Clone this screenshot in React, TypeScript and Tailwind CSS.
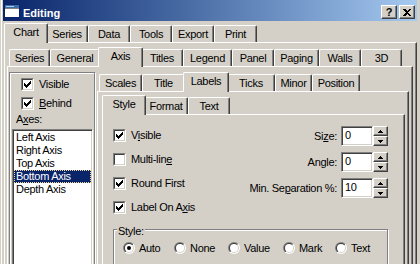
import React from "react";

const tabBase =
  "shrink-0 bg-[#D4D0C8] border-t border-l border-r border-white border-r-[#404040] rounded-t-[2px] shadow-[inset_-1px_0_0_#808080] pt-[2px] text-center whitespace-nowrap leading-[13px]";

function Tab({ label, w, sel }: { label: string; w: string; sel?: boolean }) {
  if (sel) {
    return <div className={`${tabBase} ${w} relative z-10 -mx-[2px] -mb-px h-[20px]`}>{label}</div>;
  }
  return <div className={`${tabBase} ${w} h-[17px]`}>{label}</div>;
}

function TabRow({ children }: { children: React.ReactNode }) {
  return <div className="flex items-end h-[19px] pl-[2px]">{children}</div>;
}

const panelCls =
  "bg-[#D4D0C8] border-t border-l border-r border-white border-r-[#404040] shadow-[inset_-1px_0_0_#808080]";

function Check({ on }: { on?: boolean }) {
  return (
    <span className="block w-[13px] h-[13px] shrink-0 border border-t-[#808080] border-l-[#808080] border-r-white border-b-white">
      <span className="block w-[11px] h-[11px] border border-t-[#404040] border-l-[#404040] border-r-[#D4D0C8] border-b-[#D4D0C8] bg-white">
        {on && (
          <svg width="9" height="9" viewBox="0 0 9 9" shapeRendering="crispEdges" className="block">
            {[
              [1, 3],
              [2, 4],
              [3, 5],
              [4, 4],
              [5, 3],
              [6, 2],
              [7, 1],
            ].map(([x, y]) => (
              <rect key={x} x={x} y={y} width="1" height="3" fill="#000" />
            ))}
          </svg>
        )}
      </span>
    </span>
  );
}

function CheckRow({ on, children }: { on?: boolean; children: React.ReactNode }) {
  return (
    <div className="flex items-center h-[13px] gap-[5px] whitespace-nowrap">
      <Check on={on} />
      <span>{children}</span>
    </div>
  );
}

function Radio({ on }: { on?: boolean }) {
  return (
    <svg width="12" height="12" viewBox="0 0 12 12" className="block shrink-0">
      <defs>
        <linearGradient id="rgo" x1="0" y1="0" x2="1" y2="1">
          <stop offset="0.5" stopColor="#808080" />
          <stop offset="0.5" stopColor="#ffffff" />
        </linearGradient>
        <linearGradient id="rgi" x1="0" y1="0" x2="1" y2="1">
          <stop offset="0.5" stopColor="#404040" />
          <stop offset="0.5" stopColor="#D4D0C8" />
        </linearGradient>
      </defs>
      <circle cx="6" cy="6" r="6" fill="url(#rgo)" />
      <circle cx="6" cy="6" r="5" fill="url(#rgi)" />
      <circle cx="6" cy="6" r="4" fill="#fff" />
      {on && <circle cx="6" cy="6" r="2" fill="#000" />}
    </svg>
  );
}

function RadioItem({ on, label, w }: { on?: boolean; label: string; w: string }) {
  return (
    <div className={`flex items-center h-[12px] ${w} shrink-0 whitespace-nowrap`}>
      <Radio on={on} />
      <span className="ml-[4px]">{label}</span>
    </div>
  );
}

function SpinBtn({ up }: { up?: boolean }) {
  return (
    <div className="h-[10px] w-[15px] bg-[#D4D0C8] border border-t-white border-l-white border-r-[#404040] border-b-[#404040] shadow-[inset_-1px_-1px_0_#808080] flex items-center justify-center">
      <svg width="5" height="3" viewBox="0 0 5 3" shapeRendering="crispEdges" className="block">
        {up ? (
          <path d="M2 0h1v1h1v1h1v1H0V2h1V1h1z" fill="#000" />
        ) : (
          <path d="M0 0h5v1H4v1H3v1H2V2H1V1H0z" fill="#000" />
        )}
      </svg>
    </div>
  );
}

function Field({ label, value }: { label: React.ReactNode; value: string }) {
  return (
    <div className="flex items-center h-[20px] whitespace-nowrap">
      <span>{label}</span>
      <div className="ml-[4px] w-[32px] h-[20px] bg-white border border-t-[#808080] border-l-[#808080] border-r-white border-b-white shadow-[inset_1px_1px_0_#404040,inset_-1px_-1px_0_#D4D0C8] pl-[3px] leading-[16px]">
        {value}
      </div>
      <div className="flex flex-col">
        <SpinBtn up />
        <SpinBtn />
      </div>
    </div>
  );
}

function CapBtn({ children }: { children: React.ReactNode }) {
  return (
    <div className="w-[16px] h-[14px] bg-[#D4D0C8] border border-t-white border-l-white border-r-[#404040] border-b-[#404040] shadow-[inset_-1px_-1px_0_#808080] flex items-center justify-center">
      {children}
    </div>
  );
}

export default function App() {
  const items = ["Left Axis", "Right Axis", "Top Axis", "Bottom Axis", "Depth Axis"];
  return (
    <div className="w-[420px] h-[264px] overflow-hidden bg-[#D4D0C8] text-[11px] leading-[13px] tracking-[-0.3px] text-black font-['Liberation_Sans',Arial,sans-serif] pl-[1px]">
      <div className="border-l border-white pl-[1px] w-[417px] h-[300px]">
        {/* title bar */}
        <div className="h-[21px] w-[414px] flex items-start bg-linear-to-r from-[#0A246A] to-[#A6CAF0]">
          <svg width="16" height="14" viewBox="0 0 16 14" className="block ml-[1px] mt-[4px]" shapeRendering="crispEdges">
            <rect x="0" y="0" width="16" height="14" fill="#fff" />
            <rect x="0.5" y="0.5" width="15" height="13" fill="none" stroke="#0A246A" />
            <rect x="1" y="1" width="14" height="3" fill="#3A6EA5" />
            <rect x="2" y="2" width="8" height="1" fill="#A6CAF0" />
            <rect x="1" y="4" width="14" height="1" fill="#808080" />
          </svg>
          <span className="ml-[3px] mt-[7px] text-white font-bold tracking-normal">Editing</span>
          <div className="ml-auto mr-[2px] mt-[5px] flex gap-[2px]">
            <CapBtn>
              <span className="font-bold text-[11px] leading-[11px] mt-[1px] tracking-normal">?</span>
            </CapBtn>
            <CapBtn>
              <svg width="8" height="7" viewBox="0 0 8 7" shapeRendering="crispEdges" className="block">
                <path d="M0 0h2l2 2 2-2h2L5 3.5 8 7H6L4 5 2 7H0l3-3.5z" fill="#000" />
              </svg>
            </CapBtn>
          </div>
        </div>

        {/* top tab control */}
        <div className="mt-[2px] ml-[1px] w-[413px]">
          <TabRow>
            <Tab label="Chart" w="w-[44px]" sel />
            <Tab label="Series" w="w-[42px]" />
            <Tab label="Data" w="w-[42px]" />
            <Tab label="Tools" w="w-[42px]" />
            <Tab label="Export" w="w-[42px]" />
            <Tab label="Print" w="w-[43px]" />
          </TabRow>
          <div className={`${panelCls} w-[413px] h-[260px] pt-[4px] pl-[2px] pr-[3px]`}>
            {/* second tab control */}
            <TabRow>
              <Tab label="Series" w="w-[41px]" />
              <Tab label="General" w="w-[50px]" />
              <Tab label="Axis" w="w-[45px]" sel />
              <Tab label="Titles" w="w-[42px]" />
              <Tab label="Legend" w="w-[49px]" />
              <Tab label="Panel" w="w-[42px]" />
              <Tab label="Paging" w="w-[45px]" />
              <Tab label="Walls" w="w-[42px]" />
              <Tab label="3D" w="w-[41px]" />
            </TabRow>
            <div className={`${panelCls} w-[406px] h-[230px] pt-[5px] pl-[1px] pr-[3px] flex items-start`}>
              {/* left panel */}
              <div className="w-[86px] h-[220px] shrink-0 border border-[#808080] shadow-[inset_1px_1px_0_#fff,1px_1px_0_#fff] pl-[2px] pt-[5px]">
                <div className="ml-[9px] flex flex-col gap-[6px]">
                  <CheckRow on>Visible</CheckRow>
                  <CheckRow on>
                    <u>B</u>ehind
                  </CheckRow>
                </div>
                <div className="ml-[4px] mt-[3px] h-[13px]">
                  A<u>x</u>es:
                </div>
                <div className="mt-[3px] w-[81px] h-[150px] bg-white border border-t-[#808080] border-l-[#808080] border-r-white border-b-white shadow-[inset_1px_1px_0_#404040,inset_-1px_-1px_0_#D4D0C8] p-[1px]">
                  {items.map((it) =>
                    it === "Bottom Axis" ? (
                      <div
                        key={it}
                        className="h-[13px] bg-[#0A246A] text-white border border-dotted border-[#F5DB95] pl-[1px] leading-[11px] whitespace-nowrap"
                      >
                        {it}
                      </div>
                    ) : (
                      <div key={it} className="h-[13px] pl-[2px] whitespace-nowrap">
                        {it}
                      </div>
                    )
                  )}
                </div>
              </div>

              {/* third tab control */}
              <div className="ml-[2px] w-[312px] shrink-0">
                <TabRow>
                  <Tab label="Scales" w="w-[43px]" />
                  <Tab label="Title" w="w-[43px]" />
                  <Tab label="Labels" w="w-[46px]" sel />
                  <Tab label="Ticks" w="w-[48px]" />
                  <Tab label="Minor" w="w-[37px]" />
                  <Tab label="Position" w="w-[48px]" />
                </TabRow>
                <div className={`${panelCls} w-[312px] h-[200px] pt-[3px] pl-[4px] pr-[3px]`}>
                  <TabRow>
                    <Tab label="Style" w="w-[44px]" sel />
                    <Tab label="Format" w="w-[44px]" />
                    <Tab label="Text" w="w-[42px]" />
                  </TabRow>
                  <div className={`${panelCls} w-[303px] h-[180px] pl-[10px] pr-[16px]`}>
                    <div className="flex h-[114px]">
                      <div className="pt-[14px] flex flex-col gap-[11px]">
                        <CheckRow on>
                          V<u>i</u>sible
                        </CheckRow>
                        <CheckRow>
                          Multi-lin<u>e</u>
                        </CheckRow>
                        <CheckRow on>Round First</CheckRow>
                        <CheckRow on>
                          Label On A<u>x</u>is
                        </CheckRow>
                      </div>
                      <div className="ml-auto pt-[11px] flex flex-col items-end gap-[6px]">
                        <Field
                          label={
                            <>
                              Si<u>z</u>e:
                            </>
                          }
                          value="0"
                        />
                        <Field label="Angle:" value="0" />
                        <Field
                          label={
                            <>
                              Min. Se<u>p</u>aration %:
                            </>
                          }
                          value="10"
                        />
                      </div>
                    </div>
                    <div className="relative w-[275px] h-[60px] border border-[#808080] shadow-[inset_1px_1px_0_#fff,1px_1px_0_#fff] pl-[9px] pt-[12px]">
                      <span className="absolute top-[-5px] left-[3px] px-[1px] bg-[#D4D0C8] leading-[13px]">Style:</span>
                      <div className="flex">
                        <RadioItem on label="Auto" w="w-[51px]" />
                        <RadioItem label="None" w="w-[54px]" />
                        <RadioItem label="Value" w="w-[55px]" />
                        <RadioItem label="Mark" w="w-[52px]" />
                        <RadioItem label="Text" w="w-[50px]" />
                      </div>
                    </div>
                  </div>
                </div>
              </div>
            </div>
          </div>
        </div>
      </div>
    </div>
  );
}
